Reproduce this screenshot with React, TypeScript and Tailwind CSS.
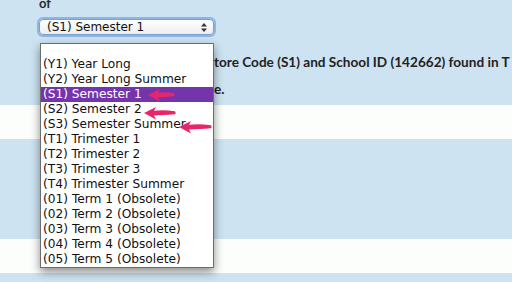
import React from 'react';

const terms = [
  '(Y1) Year Long',
  '(Y2) Year Long Summer',
  '(S1) Semester 1',
  '(S2) Semester 2',
  '(S3) Semester Summer',
  '(T1) Trimester 1',
  '(T2) Trimester 2',
  '(T3) Trimester 3',
  '(T4) Trimester Summer',
  '(01) Term 1 (Obsolete)',
  '(02) Term 2 (Obsolete)',
  '(03) Term 3 (Obsolete)',
  '(04) Term 4 (Obsolete)',
  '(05) Term 5 (Obsolete)',
];

// hand-drawn style pink arrow pointing left
const Arrow: React.FC<{ x: number; y: number; len: number }> = ({ x, y, len }) => (
  <path
    d={`M${x} ${y} L${x + 12} ${y - 6} L${x + 10} ${y - 2.2} Q${x + len * 0.6} ${y - 3.5} ${x + len} ${y - 1.8} Q${x + len + 1.5} ${y} ${x + len} ${y + 1.2} Q${x + len * 0.6} ${y + 2} ${x + 10} ${y + 2.4} L${x + 12} ${y + 6.5} Z`}
    fill="#e8256a"
  />
);

const App: React.FC = () => {
  return (
    <div className="relative w-[512px] h-[282px] overflow-hidden bg-[#cde3f1] font-['DejaVu_Sans',sans-serif]">
      <div className="h-[105px] bg-[#cde3f1] pl-[39px] overflow-hidden">
        <div className="-mt-[5px] h-[16px] font-['Lato',sans-serif] font-bold text-[13px] leading-[16px] text-[#2a2a2a]">of</div>

        {/* select, open */}
        <div className="mt-[8px] w-[175px] h-[16px] rounded-[4px] border border-[#7a9fd0] shadow-[0_0_0_2px_#8db6e6] bg-gradient-to-b from-white to-[#eeeeee] flex items-center justify-between pl-[7px] pr-[6px]">
          <span className="text-[12px] leading-[14px] text-[#111]">(S1) Semester 1</span>
          <svg width="6" height="9" viewBox="0 0 6 9">
            <path d="M0 3.5 L3 0 L6 3.5 Z M0 5.5 L3 9 L6 5.5 Z" fill="#333" />
          </svg>
        </div>

        <div className="ml-[175px] mt-[14px] font-['Lato',sans-serif] font-bold text-[13.6px] leading-[27px] text-[#222] whitespace-nowrap">
          <div>tore Code (S1) and School ID (142662) found in T</div>
          <div>e.</div>
        </div>
      </div>
      <div className="h-[34px] bg-[#fcfefb]" />
      <div className="h-[100px] bg-[#cde3f1]" />
      <div className="h-[34px] bg-[#fcfefb]" />
      <div className="h-[9px] bg-[#cde3f1]" />

      {/* dropdown list */}
      <div className="absolute left-[40px] top-[43px] w-[174px] h-[225px] bg-white border border-[#6d6d6d] shadow-[0_4px_9px_rgba(0,0,0,0.45)] pt-[13px]">
        {terms.map((t) => (
          <div
            key={t}
            className={
              t === '(S1) Semester 1'
                ? 'h-[15px] leading-[15px] pl-[2px] text-[12.2px] bg-[#7434ab] text-white'
                : 'h-[15px] leading-[15px] pl-[2px] text-[12.2px] text-[#111]'
            }
          >
            {t}
          </div>
        ))}
      </div>

      <svg className="absolute left-0 top-0" width="512" height="282">
        <Arrow x={148} y={95} len={26} />
        <Arrow x={144} y={113} len={31} />
        <Arrow x={179} y={127} len={32} />
      </svg>
    </div>
  );
};

export default App;
